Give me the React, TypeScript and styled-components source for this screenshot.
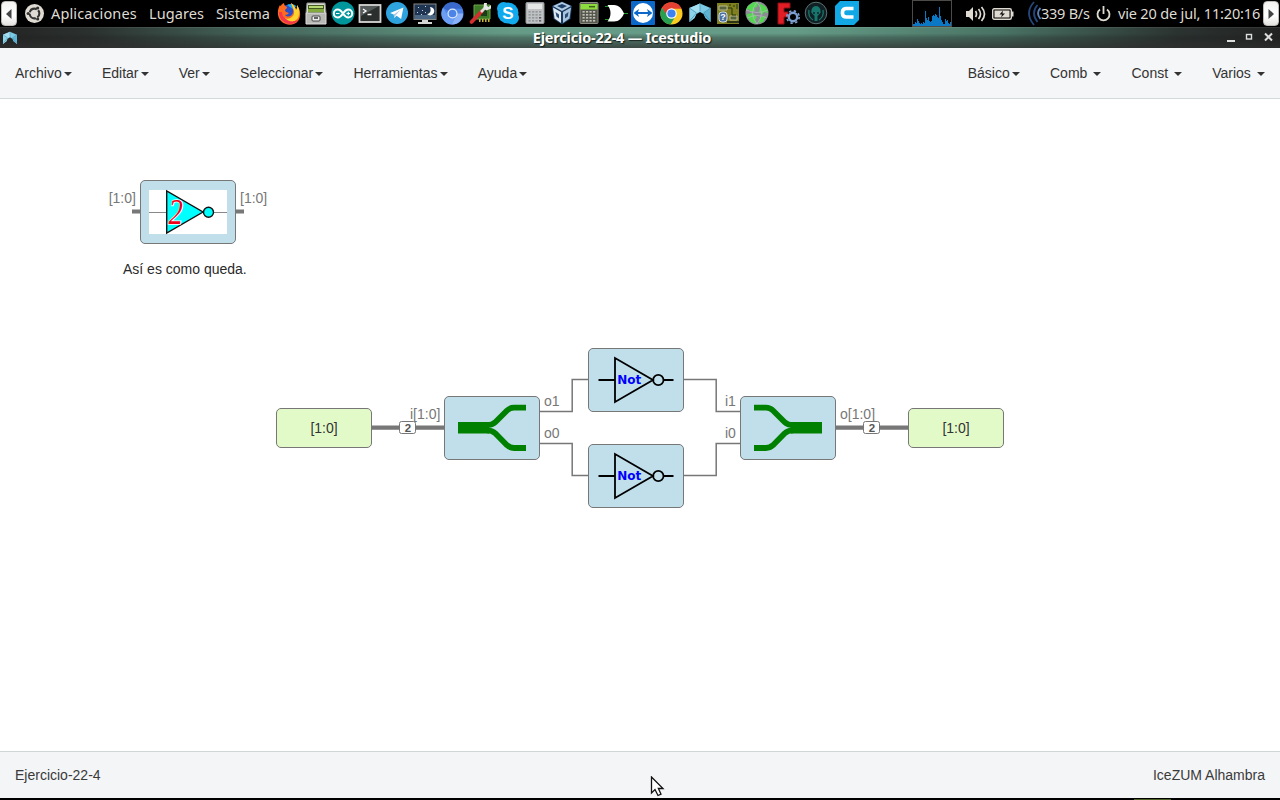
import React from "react";
import styled, { createGlobalStyle } from "styled-components";

const GlobalStyle = createGlobalStyle`
  * { box-sizing: border-box; }
  body { margin: 0; background: #000; overflow: hidden; }
`;

const Desktop = styled.div`
  width: 1280px;
  height: 800px;
  display: flex;
  flex-direction: column;
  background: #000;
  font-family: "Liberation Sans", Arial, sans-serif;
  font-size: 14px;
  svg { display: block; flex: none; }
`;

/* ---------- desktop panel ---------- */
const Panel = styled.header`
  height: 27px;
  flex: none;
  display: flex;
  align-items: center;
  background: #000;
`;
const HideButton = styled.div<{ $side: "left" | "right" }>`
  width: 16px;
  height: 25px;
  flex: none;
  margin: ${(p) => (p.$side === "left" ? "0 0 0 1px" : "0 1px 0 auto")};
  border-radius: 4px;
  border: 1px solid #bdbab6;
  background: linear-gradient(#f4f3f2, #fff 60%, #e4e2e0);
  display: flex;
  align-items: center;
  justify-content: center;
`;
const UbuntuSlot = styled.div`
  width: 34px;
  padding-left: 8px;
`;
const PanelText = styled.span<{ $w: number; $ls?: number }>`
  width: ${(p) => p.$w}px;
  flex: none;
  font: 14.5px/27px "Noto Sans", sans-serif;
  letter-spacing: ${(p) => p.$ls ?? 0}px;
  color: #dfdbd2;
  white-space: nowrap;
`;
const Launchers = styled.div`
  display: flex;
  width: 637px;
  flex: none;
  height: 25px;
  align-items: center;
  margin-bottom: 1px;
`;
const Slot = styled.div<{ $w: number }>`
  width: ${(p) => p.$w}px;
  flex: none;
  display: flex;
  justify-content: center;
`;
const Tray = styled.div`
  display: flex;
  align-items: center;
  flex: 1;
`;
const Monitor = styled.div`
  width: 40px;
  height: 27px;
  flex: none;
  border: 1px solid #4c4b47;
  margin-right: 14px;
`;
const TrayIcon = styled.div<{ $w: number }>`
  width: ${(p) => p.$w}px;
  flex: none;
`;

/* ---------- window ---------- */
const TitleBar = styled.div`
  height: 21px;
  flex: none;
  display: grid;
  grid-template-columns: 32px 1fr 70px;
  align-items: center;
  padding-left: 2px;
  background:
    linear-gradient(rgba(255,255,255,.08) 0 1px, rgba(0,0,0,0) 1px, rgba(0,0,0,.0) 30%, rgba(30,30,30,.3) 50%, rgba(45,45,45,.75) 100%),
    linear-gradient(90deg, #242424 0, #2b312f 7%, #44655a 20%, #659b87 40%, #659b87 62%, #4a7465 78%, #2b3331 92%, #222 100%);
`;
const Title = styled.div`
  text-align: center;
  font: bold 14.5px/21px "Noto Sans", sans-serif;
  letter-spacing: -0.2px;
  color: #fff;
  text-shadow: 1px 1px 1px #18211e;
`;
const WindowButtons = styled.div`
  display: flex;
  justify-content: flex-end;
  padding-right: 6px;
`;
const NavBar = styled.nav`
  height: 51px;
  flex: none;
  display: flex;
  justify-content: space-between;
  background: #f5f6f8;
  border-bottom: 1px solid #d3dada;
`;
const Menu = styled.div`
  display: flex;
`;
const MenuItem = styled.div`
  padding: 15px;
  line-height: 20px;
  color: #333;
  white-space: pre;
`;
const Caret = styled.b`
  display: inline-block;
  margin-left: 2.25px;
  vertical-align: middle;
  border-top: 4px solid #333;
  border-left: 4px solid transparent;
  border-right: 4px solid transparent;
`;
const Canvas = styled.main`
  position: relative;
  height: 652px;
  flex: none;
  background: #fff;
`;
const Wires = styled.svg`
  position: absolute;
  inset: 0;
`;
const Block = styled.div<{ $x: number; $y: number; $kind?: "port" }>`
  position: absolute;
  left: ${(p) => p.$x}px;
  top: ${(p) => p.$y}px;
  width: 96px;
  height: ${(p) => (p.$kind ? 40 : 64)}px;
  border: 1px solid #777;
  border-radius: 5px;
  background: ${(p) => (p.$kind ? "#e2fac8" : "#c0dfeb")};
  color: #333;
  display: flex;
  align-items: center;
  justify-content: center;
`;
const Label = styled.span<{ $x: number; $y: number; $dark?: boolean }>`
  position: absolute;
  left: ${(p) => p.$x}px;
  top: ${(p) => p.$y}px;
  line-height: 16px;
  white-space: nowrap;
  color: ${(p) => (p.$dark ? "#2a2a2a" : "#777")};
`;
const BusSize = styled.span<{ $x: number }>`
  position: absolute;
  left: ${(p) => p.$x}px;
  top: 322px;
  width: 17px;
  height: 13px;
  border: 1px solid #777;
  border-radius: 2.5px;
  background: #fff;
  color: #555;
  text-align: center;
  font: bold 11.5px/12px "Liberation Sans", sans-serif;
`;
const StatusBar = styled.footer`
  height: 47px;
  flex: none;
  display: flex;
  align-items: center;
  justify-content: space-between;
  padding: 0 15px;
  border-top: 1px solid #d0d5d6;
  background: #f4f5f7;
  color: #3a3a3a;
`;
const BottomEdge = styled.div`
  height: 1px;
  width: 37px;
  margin: 1px 0 0 1134px;
  background: #4c6127;
`;
const Pointer = styled.svg`
  position: absolute;
  left: 650px;
  top: 776px;
`;

/* ---------- launcher icons ---------- */
const Icon = ({ children, size = 24 }: { children: React.ReactNode; size?: number }) => (
  <svg width={size} height={size} viewBox="0 0 24 24">{children}</svg>
);

const Firefox = () => (
  <Icon>
    <circle cx="12" cy="12.5" r="9" fill="#2b4fc7" />
    <path d="M10 4c3-2 8-1 10 2-3-1-4 1-3 3z" fill="#19a7f0" />
    <path d="M3 4c-3 5-3 12 1 16 5 5 13 5 17 0 3-4 3-10-1-16 0 3 0 4-1 5-1-3-2-5-5-7 1 4 3 6 2 10-1 3-5 5-8 2 2 0 3-1 4-2-2-1-4-1-4-3 0-1 2-1 2-3-2-1-3-2-3-4-2 1-3 2-3 3-1 0-1-1-1-4z" fill="#ff6a1f" />
    <path d="M20 4c0 3 0 4-1 5-1-3-2-5-5-7 1 4 4 7 3 11-2 5-8 6-11 3 2 6 11 7 15 1 2-4 2-9-1-13z" fill="#ffd22e" />
    <path d="M2 11c0 6 4 11 10 12 4 0 7-1 9-4-4 2-9 2-12-1-3-2-4-4-4-7z" fill="#f4364c" />
  </Icon>
);
const Cabinet = () => (
  <Icon>
    <path d="M3 2h18l1 10H2z" fill="#d9d9d3" stroke="#8b8b86" />
    <path d="M4 4h16v9H4z" fill="#435b21" />
    <path d="M5 5h14v2H5z" fill="#b6d873" /><path d="M4 8h16v3H4z" fill="#84aa3e" />
    <path d="M2 12h20v11H2z" fill="#b9b9b5" stroke="#dedddd" />
    <rect x="8" y="15" width="8" height="5" rx="1" fill="#eee" stroke="#444" />
    <path d="M10 17h4" stroke="#333" strokeWidth="1.5" />
  </Icon>
);
const Arduino = () => (
  <Icon>
    <circle cx="12" cy="12" r="11.6" fill="#00979c" />
    <path d="M12 12.5c-2-3-3.500-4-5.200-4a4 4 0 0 0 0 8c1.700 0 3.200-1 5.200-4s3.500-4 5.200-4a4 4 0 0 1 0 8c-1.700 0-3.200-1-5.200-4z" fill="none" stroke="#fff" strokeWidth="2" />
    <path d="M5 12.500h3.500M15.500 12.500H19M17.300 10.700v3.600" stroke="#fff" strokeWidth="1.200" />
  </Icon>
);
const Terminal = () => (
  <Icon>
    <rect x="1.500" y="4" width="21" height="17" fill="#2b302f" stroke="#d6d6d4" strokeWidth="1.800" />
    <path d="M3 5h18L3 15z" fill="#555a5a" />
    <path d="M5 8l3 2-3 2M9.500 13.500h4" fill="none" stroke="#fff" strokeWidth="1.300" />
  </Icon>
);
const Telegram = () => (
  <Icon size={22}>
    <circle cx="12" cy="12" r="12" fill="#2fa3de" />
    <path d="M4.500 12L19 6l-2.500 12.500-5-3.500-2.500 2.500-.5-4z" fill="#fff" />
    <path d="M8.500 13.500L16 8.500l-5.500 6-1.500 3z" fill="#a9cbe0" />
  </Icon>
);
const ScreenSaver = () => (
  <Icon>
    <rect x="1" y="3" width="22" height="15.500" fill="#1f3551" stroke="#888" />
    <path d="M2 14h20v4H2z" fill="#4a6884" />
    <path d="M17 6a4.200 4.200 0 1 1-3 7c3 0 4.500-3 3-7z" fill="#fff" />
    <path d="M5 6h1v1H5zM9 9h1v1H9zM4 11h1v1H4zM12 5h1v1h-1zM8 13h1v1H8zM12 11h1v1h-1z" fill="#c9d7e4" />
    <path d="M9 19h6v2h4v2H5v-2h4z" fill="#d5d5d5" />
  </Icon>
);
const Chromium = () => (
  <Icon size={23}>
    <circle cx="12" cy="12" r="11.500" fill="#4d86e8" />
    <path d="M12 12L2 6a11.500 11.500 0 0 1 20.500 1H12z" fill="#3a69cc" />
    <path d="M12 12h11a11.500 11.500 0 0 1-11.500 11.500z" fill="#8ab2f8" />
    <path d="M7.500 14.500L2 6a11.500 11.500 0 0 0 9.500 17.500l4-8z" fill="#6a9df3" />
    <circle cx="12" cy="12" r="5.300" fill="#dde8fb" /><circle cx="12" cy="12" r="4" fill="#4b84e6" />
  </Icon>
);
const BoardTool = () => (
  <Icon>
    <path d="M6 4h16v14H6z" fill="#3d7b28" stroke="#6ea449" /><path d="M13 9h6v6h-6z" fill="#1c3b16" />
    <path d="M11 18h1.500v3H11zM14 18h1.500v3H14zM17 18h1.500v3H17zM20 18h1.500v3H20z" fill="#cbb634" />
    <path d="M3.500 21L14 10" stroke="#d32f2f" strokeWidth="3.800" strokeLinecap="round" />
    <path d="M13 11l6-6" stroke="#ddd" strokeWidth="2.600" /><path d="M16 2l-.5 5 3 2.500 4.500-2V4l-2.500 2-2-1 .5-3z" fill="#e7e7e7" />
  </Icon>
);
const SkypeText = styled.text`
  font: bold 17px "Liberation Sans", sans-serif;
  fill: #fff;
`;
const Skype = () => (
  <Icon>
    <circle cx="12" cy="12" r="10.500" fill="#12a9ed" /><circle cx="7.500" cy="7.500" r="6.500" fill="#12a9ed" /><circle cx="16.500" cy="17" r="6.500" fill="#12a9ed" />
    <SkypeText x="12" y="18" textAnchor="middle">S</SkypeText>
  </Icon>
);
const Calculator = ({ green }: { green?: boolean }) => (
  <Icon>
    <rect x="3" y="1.500" width="18" height="21" rx="1" fill={green ? "#56584f" : "#bfc1c2"} stroke={green ? "#8b8d83" : "#95989a"} />
    <rect x={green ? 3.5 : 5} y="3" width={green ? 17 : 14} height={green ? 5.5 : 5} fill={green ? "#8ddc3d" : "#e4e6e6"} />
    {green && <path d="M12 5.700h6" stroke="#38601a" strokeWidth="1.500" />}
    {[10, 13, 16, 19].map((y) => [5.5, 9, 12.500, 16].map((x) => (
      <rect key={`${x}-${y}`} x={x} y={y} width="2.200" height="1.600" fill={green ? "#c2c2b8" : x > 15 && y > 15 ? "#5e6264" : "#92979a"} />
    )))}
  </Icon>
);
const VirtualBox = () => (
  <Icon>
    <path d="M12 .5l10 4.500-1.500 13L12 23.500 3.500 18 2 5z" fill="#18395f" />
    <path d="M12 1l9 4-9 5-9-5z" fill="#b3cce2" /><path d="M12 3l5 2-5 2.500L7 5z" fill="#1e406a" />
    <path d="M3 6.500l8 4.500v11L4.500 17.500z" fill="#dfe9f2" /><path d="M5.500 11l3.500 2.500v4L6.500 15.500z" fill="#294c77" />
    <path d="M21 6.500L13 11v11l6.500-4.500z" fill="#a9c3dc" /><path d="M18.500 11L15 13.500v4l2.800-2z" fill="#294c77" />
  </Icon>
);
const Gate = () => (
  <Icon>
    <path d="M1 5.500h5M1 18.500h5M19 12.500h5" stroke="#1d9b28" strokeWidth="1.200" />
    <path d="M3.500 4H10c5 0 8 4 10 8.500C18 17 15 20.500 10 20.500H3.500c4-5 4-11.500 0-16.500z" fill="#fff" />
  </Icon>
);
const TeamViewer = () => (
  <Icon>
    <rect width="24" height="24" rx="1" fill="#0b68c8" /><circle cx="12" cy="12" r="10" fill="#fff" />
    <path d="M2.500 12l5.500-4-1 3h10l-1-3 5.500 4-5.500 4 1-3H7l1 3z" fill="#0b68c8" />
  </Icon>
);
const Chrome = () => (
  <Icon size={23}>
    <circle cx="12" cy="12" r="11.500" fill="#fbcb22" />
    <path d="M12 7h10.500A11.500 11.500 0 0 0 2 6l5 9z" fill="#e54132" />
    <path d="M2 6a11.500 11.500 0 0 0 9 17.500L16 15l-8-.5z" fill="#27a052" />
    <circle cx="12" cy="12" r="5.500" fill="#fff" /><circle cx="12" cy="12" r="4.300" fill="#3c82f0" />
  </Icon>
);
const IceLogo = ({ size = 24 }: { size?: number }) => (
  <Icon size={size}>
    <path d="M1.500 7L12 2.500 22.500 7v14l-5-4-2-4-3.500-2-3.500 2-2 4-5 4z" fill="#7bc9e4" />
    <path d="M12 2.500L1.500 7l7 5 3.500-2z" fill="#a4def0" />
    <path d="M1.500 21V7l7 5-2 5z" fill="#8dd3ea" />
    <path d="M22.500 7l-7 5 2 5 5 4z" fill="#5fb4d4" />
    <path d="M1.500 7l7 5-7 8M22.500 7l-7 5 7 8M12 2.500V10" fill="none" stroke="#3c8fb0" strokeWidth=".7" />
  </Icon>
);
const Blocks = () => (
  <Icon>
    <path d="M1 2h22v21H1z" fill="#808021" />
    <path d="M3 5h8v4H3zM14 15h7v4h-7z" fill="#56633d" stroke="#b7b88c" />
    <path d="M12 7h4v7h4M14 3v2M18 4v2M21 3v5" fill="none" stroke="#27350d" />
    <rect x="3" y="11" width="8" height="10" rx="3" fill="#4c71a0" stroke="#d2dce8" />
    <text x="7" y="19" textAnchor="middle" fill="#fff" fontSize="9" fontWeight="bold">?</text>
    <path d="M11 21h12" stroke="#2b3514" strokeWidth="2" />
  </Icon>
);
const Globe = () => (
  <Icon>
    <circle cx="12" cy="12" r="11.500" fill="#8b8c94" />
    <path d="M3 5l6-4 4 1-1 4-3 1 1 3-4 1-2-3-3 1zM14 2l7 4 2 6-4-1-2 3-3-3 1-4zM2 13l6-1 4 4-2 3 2 4-6-2-4-5zM15 16l6-1-3 6-4 1z" fill="#52da4e" />
    <path d="M1 9q11 5 22 0M2 17q10-5 20 0M12 1q-9 11 0 22M12 1q9 11 0 22" fill="none" stroke="#c4b9ce" strokeWidth=".6" />
  </Icon>
);
const FreeCad = () => (
  <Icon>
    <path d="M2 2h12v5H8v4h4v5H8v7H2z" fill="#e01d25" stroke="#8d1117" />
    <circle cx="17" cy="16" r="4.200" fill="none" stroke="#7d9fd0" strokeWidth="2.400" />
    <circle cx="17" cy="16" r="6.200" fill="none" stroke="#7d9fd0" strokeWidth="1.600" strokeDasharray="2.400 2.470" />
  </Icon>
);
const Kraken = () => (
  <Icon>
    <circle cx="12" cy="12" r="10.800" fill="#112023" stroke="#5c7175" strokeWidth="1" />
    <path d="M12 5c-4 0-5 4-4.500 7l3 3v5h3v-5l3-3c.5-3-.5-7-4.500-7z" fill="#17766e" />
    <path d="M5 9c-1 5 1 8 4 10M19 9c1 5-1 8-4 10" fill="none" stroke="#17766e" strokeWidth="1.300" />
    <circle cx="10" cy="12" r="1" fill="#10252a" /><circle cx="14" cy="12" r="1" fill="#10252a" />
  </Icon>
);
const Cura = () => (
  <Icon>
    <path d="M5 0h19v19l-5 5H0V5z" fill="#12a8e6" />
    <path d="M18.500 7.500h-7Q7.500 7.500 7.500 11v1.500Q7.500 16 11.500 16h7" fill="none" stroke="#fff" strokeWidth="3.600" />
  </Icon>
);

const launchers: [React.ReactElement, number][] = [
  [<Firefox />, 27.2], [<Cabinet />, 27.2], [<Arduino />, 27.2], [<Terminal />, 27.2],
  [<Telegram />, 27.2], [<ScreenSaver />, 27.2], [<Chromium />, 27.8], [<BoardTool />, 28],
  [<Skype />, 27.2], [<Calculator />, 27], [<VirtualBox />, 27.2], [<Calculator green />, 27],
  [<Gate />, 27], [<TeamViewer />, 28], [<Chrome />, 29], [<IceLogo />, 27],
  [<Blocks />, 29], [<Globe />, 30], [<FreeCad />, 31], [<Kraken />, 25], [<Cura />, 37],
];

const Ubuntu = () => (
  <svg width="19" height="19" viewBox="0 0 18 18">
    <circle cx="9" cy="9" r="9" fill="#dfdbd2" />
    <circle cx="9" cy="9" r="4.600" fill="none" stroke="#333" strokeWidth="2" strokeDasharray="8.200 1.430" strokeDashoffset="4" />
    <circle cx="3" cy="9" r="1.500" fill="#333" /><circle cx="12" cy="3.800" r="1.500" fill="#333" /><circle cx="12" cy="14.200" r="1.500" fill="#333" />
  </svg>
);

const load = [2, 2, 4, 3, 7, 5, 3, 2, 3, 2, 4, 3, 15, 8, 6, 9, 5, 4, 5, 10, 11, 10, 12, 11, 9, 8, 19, 10, 6, 4, 2, 2, 7, 5, 6, 3, 2, 4];

/* ---------- diagram symbols ---------- */
const NotSymbol = () => (
  <svg width="94" height="62" viewBox="1 1 94 62">
    <g fill="none" stroke="#000" strokeWidth="1.800">
      <path d="M10.500 32H27M27 10v44L65 32zM76 32h9.500" />
      <circle cx="70.300" cy="32" r="5.200" />
    </g>
    <text x="29.300" y="36.300" fill="#00f" fontFamily="DejaVu Sans" fontWeight="bold" fontSize="12" textLength="24">Not</text>
  </svg>
);
const BusSymbol = ({ join }: { join?: boolean }) => (
  <svg width="94" height="62" viewBox="1 1 94 62">
    <g transform={join ? "translate(96 0) scale(-1 1)" : undefined}>
      <rect x="14" y="26" width="31" height="11.500" fill="#008000" />
      <path d="M82 11.700H70Q66 11.700 63 14.500L51.500 26Q48.200 29.200 43 29.200M82 52H70Q66 52 63 49.200L51.500 37.500Q48.200 34.300 43 34.300" fill="none" stroke="#008000" strokeWidth="5.800" />
    </g>
  </svg>
);
const NumberTwo = styled.text`
  font: italic 35px "Liberation Serif", serif;
  fill: #f00018;
  stroke: #fff;
  stroke-width: 1.6px;
  paint-order: stroke;
`;
const DoubleNotSymbol = () => (
  <svg width="94" height="62" viewBox="1 1 94 62">
    <rect x="9" y="10" width="78" height="44" fill="#fff" />
    <path d="M9 32.500h78" stroke="#888" />
    <path d="M26.700 11v42L63 32z" fill="#0ff" stroke="#111" strokeWidth="1.400" />
    <circle cx="68.500" cy="32.300" r="5" fill="#0ff" stroke="#111" strokeWidth="1.400" />
    <NumberTwo transform="translate(28.600 44) scale(.82 1)">2</NumberTwo>
  </svg>
);

const menus = ["Archivo", "Editar", "Ver", "Seleccionar", "Herramientas", "Ayuda"];
const libraries = ["Básico", "Comb ", "Const ", "Varios "];

export default function App() {
  return (
    <Desktop>
      <GlobalStyle />
      <Panel>
        <HideButton $side="left"><svg width="6" height="10"><path d="M5.500 0v10L0 5z" fill="#444" /></svg></HideButton>
        <UbuntuSlot><Ubuntu /></UbuntuSlot>
        <PanelText $w={98} $ls={0.12}>Aplicaciones</PanelText>
        <PanelText $w={67} $ls={0.08}>Lugares</PanelText>
        <PanelText $w={59} $ls={0.04}>Sistema</PanelText>
        <Launchers>
          {launchers.map(([icon, w], i) => <Slot key={i} $w={w}>{icon}</Slot>)}
        </Launchers>
        <Tray>
          <Monitor>
            <svg width="38" height="25">{load.map((h, i) => <rect key={i} x={i} y={25 - h} width="1.050" height={h} fill="#0a78c4" />)}</svg>
          </Monitor>
          <TrayIcon $w={26}>
            <svg width="20" height="18" fill="none" stroke="#dfdbd2" strokeWidth="1.700">
              <path d="M0 6h3l4-4v14l-4-4H0z" fill="#dfdbd2" stroke="none" />
              <path d="M9.500 6q2 3 0 6M12.500 4q4 5 0 10M15.500 2q6 7 0 14" />
            </svg>
          </TrayIcon>
          <TrayIcon $w={35}>
            <svg width="22" height="12">
              <rect x=".7" y=".7" width="18.600" height="10.600" rx="1.500" fill="none" stroke="#dfdbd2" strokeWidth="1.400" />
              <rect x="2.500" y="2.500" width="15" height="7" fill="#dfdbd2" /><path d="M20 3.500h1.500v5H20z" fill="#dfdbd2" />
              <path d="M11 2.500L7.500 6.500h2.500L9 9.500l4-4h-2.500z" fill="#111" />
            </svg>
          </TrayIcon>
          <TrayIcon $w={14}>
            <svg width="14" height="25" fill="none" stroke="#25477c" strokeWidth="1.800">
              <path d="M7 1q-10 11 0 23M10.500 4q-7 8 0 17" /><path d="M13.500 7q-5 5 0 11" stroke="#5c80b5" />
            </svg>
          </TrayIcon>
          <PanelText $w={55} $ls={-0.25}>339 B/s</PanelText>
          <TrayIcon $w={22}>
            <svg width="15" height="16" fill="none" stroke="#dfdbd2" strokeWidth="1.800"><path d="M4 3.500a6 6 0 1 0 7 0M7.500 0v8" /></svg>
          </TrayIcon>
          <PanelText $w={143} $ls={-0.17}>vie 20 de jul, 11:20:16</PanelText>
          <HideButton $side="right"><svg width="6" height="10"><path d="M.5 0v10L6 5z" fill="#444" /></svg></HideButton>
        </Tray>
      </Panel>
      <TitleBar>
        <IceLogo size={16} />
        <Title>Ejercicio-22-4 — Icestudio</Title>
        <WindowButtons>
          <svg width="50" height="14" fill="none" stroke="#ddd" strokeWidth="2">
            <path d="M3 10h8M41 2.500l7 7M48 2.500l-7 7" /><rect x="22.500" y="3.500" width="5" height="4.500" strokeWidth="1.400" />
          </svg>
        </WindowButtons>
      </TitleBar>
      <NavBar>
        <Menu>{menus.map((m) => <MenuItem key={m}>{m}<Caret /></MenuItem>)}</Menu>
        <Menu>{libraries.map((m) => <MenuItem key={m}>{m}<Caret /></MenuItem>)}</Menu>
      </NavBar>
      <Canvas>
        <Wires width="1280" height="652" fill="none" stroke="#777">
          <g strokeWidth="4.200">
            <path d="M132 112.500h9M235 112.500h9M371 328.600h74M835 328.600h74" />
          </g>
          <g strokeWidth="1.500">
            <path d="M539 312.600H572.200V280.600H589M539 344.600H572.200V376.600H589M683 280.600H716.200V312.600H741M683 376.600H716.200V344.600H741" />
          </g>
        </Wires>
        <Block $x={140} $y={81}><DoubleNotSymbol /></Block>
        <Block $x={276} $y={309} $kind="port">[1:0]</Block>
        <Block $x={444} $y={297}><BusSymbol /></Block>
        <Block $x={588} $y={249}><NotSymbol /></Block>
        <Block $x={588} $y={345}><NotSymbol /></Block>
        <Block $x={740} $y={297}><BusSymbol join /></Block>
        <Block $x={908} $y={309} $kind="port">[1:0]</Block>
        <Label $x={108.7} $y={91}>[1:0]</Label>
        <Label $x={240} $y={91}>[1:0]</Label>
        <Label $x={123} $y={162} $dark>Así es como queda.</Label>
        <Label $x={410} $y={307}>i[1:0]</Label>
        <Label $x={544} $y={294}>o1</Label>
        <Label $x={544} $y={326}>o0</Label>
        <Label $x={725} $y={294}>i1</Label>
        <Label $x={725} $y={326}>i0</Label>
        <Label $x={840} $y={307}>o[1:0]</Label>
        <BusSize $x={399.4}>2</BusSize>
        <BusSize $x={863.4}>2</BusSize>
      </Canvas>
      <StatusBar><span>Ejercicio-22-4</span><span>IceZUM Alhambra</span></StatusBar>
      <BottomEdge />
      <Pointer width="15" height="22" viewBox="0 0 15 22">
        <path d="M1.500 1v16l3.500-3.500 3 6 3-1.300-2.600-5.700H13z" fill="#fff" stroke="#111" strokeWidth="1.300" />
      </Pointer>
    </Desktop>
  );
}
